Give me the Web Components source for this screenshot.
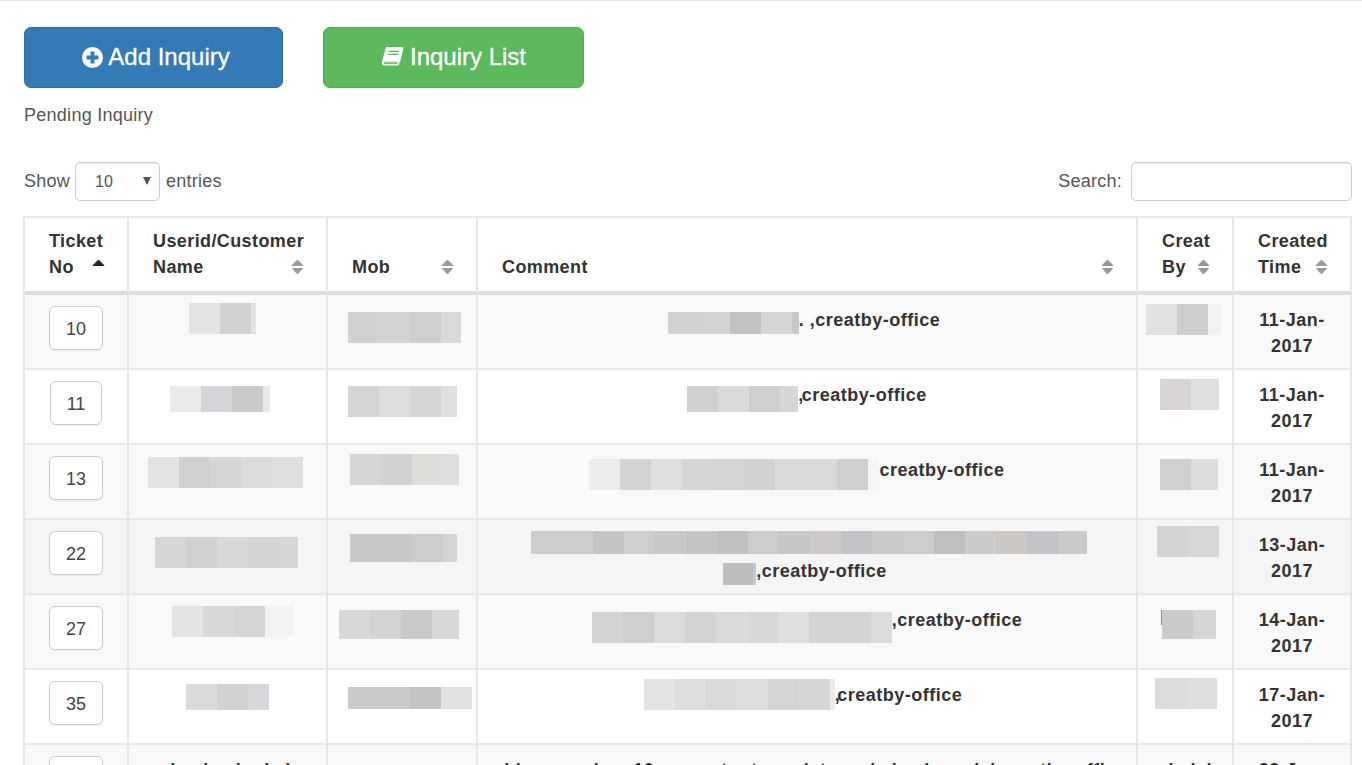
<!DOCTYPE html>
<html lang="en">
<head>
<meta charset="utf-8">
<title>Pending Inquiry</title>
<style>
  html, body { margin: 0; height: 765px; overflow: hidden; background: #fff; }
  body { font-family: "Liberation Sans", Arial, sans-serif; color: #333; }
</style>
</head>
<body>
<inquiry-page></inquiry-page>

<script>
/**
 * 打码色块 — blocks="e4e4e3 d2d0d1 dee3ea/5"，每格默认 31px 宽，/n 指定宽度
 */
class PixelBlock extends HTMLElement {
  connectedCallback() {
    const h = Number(this.getAttribute('h')) || 31;
    const dy = Number(this.getAttribute('dy')) || 0;
    const dx = Number(this.getAttribute('dx')) || 0;
    const cells = (this.getAttribute('blocks') || '').split(' ').map((c) => {
      const [color, w] = c.split('/');
      return `<i style="background:#${color};width:${w || 31}px"></i>`;
    }).join('');
    this.attachShadow({ mode: 'open' });
    this.shadowRoot.innerHTML = `
      <style>
        :host {
          display: inline-flex;
          vertical-align: top;
          height: ${h}px;
          margin: ${dy}px 0 ${-(dy + h)}px ${dx}px;
        }
        i { display: block; height: 100%; }
      </style>${cells}`;
  }
}
customElements.define('pixel-block', PixelBlock);

class SortMark extends HTMLElement {
  connectedCallback() {
    const active = this.hasAttribute('active');
    this.attachShadow({ mode: 'open' });
    this.shadowRoot.innerHTML = `
      <style>
        :host { position: absolute; right: 22px; bottom: 16px; display: block; width: 13px; height: 16px; }
        svg { display: block; }
      </style>
      <svg width="13" height="16" viewBox="0 0 13 16">
        <path d="M6.5 1 L12 6.5 H1 Z" fill="${active ? '#222' : '#999'}" stroke="${active ? '#222' : '#999'}" stroke-width="1" stroke-linejoin="round"/>
        ${active ? '' : '<path d="M1.5 9.5 H11.5 L6.5 15 Z" fill="#999" stroke="#999" stroke-width="1" stroke-linejoin="round"/>'}
      </svg>`;
  }
}
customElements.define('sort-mark', SortMark);

class ActionButton extends HTMLElement {
  connectedCallback() {
    const green = this.getAttribute('tone') === 'green';
    this.attachShadow({ mode: 'open' });
    this.shadowRoot.innerHTML = `
      <style>
        :host { display: block; }
        a {
          display: flex;
          align-items: center;
          justify-content: center;
          gap: ${green ? 6 : 5}px;
          box-sizing: border-box;
          width: ${green ? 261 : 259}px;
          height: 61px;
          padding: 0 0 1px ${green ? 0 : 5}px;
          border: 1px solid ${green ? '#4cae4c' : '#2e6da4'};
          border-radius: 7px;
          background: ${green ? '#5cb85c' : '#337ab7'};
          color: #fff;
          font-size: 24px;
          -webkit-text-stroke: .3px #fff;
          text-decoration: none;
        }
        svg { display: block; flex: none; }
      </style>
      <a href="#"><slot name="icon"></slot><slot></slot></a>`;
  }
}
customElements.define('action-button', ActionButton);

class TicketBox extends HTMLElement {
  connectedCallback() {
    this.attachShadow({ mode: 'open' });
    this.shadowRoot.innerHTML = `
      <style>
        :host {
          display: inline-flex;
          align-items: center;
          justify-content: center;
          box-sizing: border-box;
          width: ${this.getAttribute('w') || 54}px;
          height: 44px;
          padding-top: 1px;
          border: 1px solid #ccc;
          border-radius: 6px;
          background: #fff;
          box-shadow: 0 1px 1px rgba(0, 0, 0, .06);
          color: #444;
          font-size: 18px;
          font-weight: normal;
          letter-spacing: 0;
        }
      </style><slot></slot>`;
  }
}
customElements.define('ticket-box', TicketBox);

class TableControls extends HTMLElement {
  connectedCallback() {
    this.attachShadow({ mode: 'open' });
    this.shadowRoot.innerHTML = `
      <style>
        :host {
          display: flex;
          justify-content: space-between;
          align-items: center;
          height: 39px;
          font-size: 18px;
          letter-spacing: .25px;
          color: #555;
        }
        .side { display: flex; align-items: center; }
        .select {
          position: relative;
          box-sizing: border-box;
          width: 85px;
          height: 39px;
          margin: 0 6px 0 5px;
          padding: 0 0 0 19px;
          border: 1px solid #ccc;
          border-radius: 5px;
          box-shadow: inset 0 1px 1px rgba(0, 0, 0, .075);
          font-size: 16px;
          letter-spacing: 0;
          line-height: 37px;
        }
        .select svg { position: absolute; left: 67px; top: 14px; }
        input {
          box-sizing: border-box;
          width: 221px;
          height: 39px;
          margin-left: 9px;
          border: 1px solid #ccc;
          border-radius: 5px;
          box-shadow: inset 0 1px 1px rgba(0, 0, 0, .075);
          outline: none;
        }
      </style>
      <div class="side">Show
        <div class="select">10<svg width="8" height="8" viewBox="0 0 8 8"><path d="M0 0 H8 L4 8 Z" fill="#555"/></svg></div>
        entries</div>
      <div class="side">Search:<input type="search"></div>`;
  }
}
customElements.define('table-controls', TableControls);

const COL_LEFT = [25, 129, 328, 478, 1138, 1234];
const office = 'creatby-office';
const comma = (px) => `<span style="letter-spacing:${px}px">,</span>${office}`;

// 坐标都是截图里的绝对位置，渲染时换算成单元格内的偏移
const ROWS = [
  {
    no: 10, w: 54, date: '11-Jan-2017',
    user: { x: 189, y: 303, blocks: 'e4e4e3 d2d0d1 dee3ea/5' },
    mob: { x: 348, y: 312, blocks: 'd2d1cf d4d3d2 cfcfcf d9d9db/20' },
    by: [{ x: 1146, y: 304, blocks: 'e1e1e1 cecccd f1f2f4/13' }],
    comment: [[{ y: 312, h: 22, blocks: 'd2d0d1 d3d2d2 c3c1c3 d6d6d8 c9c7c9/7' }, `. ,${office}`, -3]],
  },
  {
    no: 11, w: 52, date: '11-Jan-2017',
    user: { x: 170, y: 386, h: 26, blocks: 'ebebec d5d4d8 cbc9ca e6e9ee/7' },
    mob: { x: 348, y: 386, blocks: 'd5d4d2 dcdddc d6d6d6 e0e0e2/16' },
    by: [{ x: 1160, y: 379, blocks: 'd7d3d6 e0e0e2/28' }],
    comment: [[{ y: 386, h: 26, blocks: 'cfcfcf dad9db cfcecf d6d6d8/18' }, comma(-1.5), 0]],
  },
  {
    no: 13, w: 54, date: '11-Jan-2017',
    user: { x: 148, y: 457, blocks: 'e3e3e3 d1cfd0 d4d5d7 dbdbd9 dfdfdf' },
    mob: { x: 350, y: 454, blocks: 'd6d6d4 d1d1cf dcdcd9 dddee0/16' },
    by: [{ x: 1160, y: 459, blocks: 'd1cfd0 dcdcde/27' }],
    comment: [[{ y: 459, blocks: 'ececec d3d3d3 dfdfdf d5d5d5 d5d4d5 d2d0d1 d9dadb dadadb cfcfcf f4f4f4/11' }, office, -10]],
  },
  {
    no: 22, w: 54, date: '13-Jan-2017',
    user: { x: 155, y: 537, blocks: 'd5d5d3 d1cfd0 d8d8da d3d3d3 d5d7d6/19' },
    mob: { x: 350, y: 534, h: 28, blocks: 'c9c9c9 c9c9c7 cecdcd d1d5d5/14' },
    by: [{ x: 1157, y: 526, blocks: 'd3d3d5 d7d7d7' }],
    comment: [
      [{ y: 531, h: 23, blocks: 'cdcdcd cdcdcd c4c4c6 d0cdce c8c8ca c4c4c4 c0c0c3 cccccc c7c7c7 ccc9c8 c3c3c7 cacaca cbcccb bfbfbf cbcbcb cac7c4 c3c4c8 c9cac9/29' }, '', 2],
      [{ y: 563, h: 22, blocks: 'bfbdbf/30 b8cadf/3' }, `,${office}`, -2],
    ],
  },
  {
    no: 27, w: 54, date: '14-Jan-2017',
    user: { x: 172, y: 606, blocks: 'e5e3e4 d8d8d8 d4d4d4 f2f4f4/29' },
    mob: { x: 339, y: 610, h: 29, blocks: 'd8d8d8 d2d2d3 cacaca d7d8d9/27' },
    by: [{ x: 1161, y: 610, h: 15, blocks: 'a8825f/1' }, { y: 610, h: 29, blocks: 'cbcbcd d4d4d6/23' }],
    comment: [[{ y: 612, blocks: 'd3d3d3 cfcdce dcdadc d2d2d2 dadada d7d7d7 dfdfdf d3d3d5 d3d3d3 dbdbdd/21' }, `,${office}`, 0]],
  },
  {
    no: 35, w: 54, date: '17-Jan-2017',
    user: { x: 186, y: 684, h: 26, blocks: 'dbd9da d1d1d1 d7d6da/21' },
    mob: { x: 348, y: 687, h: 22, blocks: 'cacac8 cacac8 c4c4c4 e1e1e3' },
    by: [{ x: 1155, y: 678, blocks: 'dcdadb dedee0' }],
    comment: [[{ y: 679, blocks: 'e4e3e5 dddddd d9d9d9 dedede d5d3d4 d6d6d6 ececec/5' }, comma(-2.5), -4]],
  },
];

class InquiryTable extends HTMLElement {
  block(b, col, lineTop) {
    const dx = b.x === undefined ? 0 : b.x - COL_LEFT[col];
    return `<pixel-block blocks="${b.blocks}" h="${b.h || 31}" dx="${dx}" dy="${b.y - lineTop}"></pixel-block>`;
  }

  row(r, i) {
    const lineTop = 306 + 75 * i;
    const comment = r.comment.map(([b, text, shift], n) => `
      <div class="line" style="transform:translateX(${shift}px)">${this.block(b, 3, lineTop + 1 + 26 * n)}${text}</div>`).join('');
    return `
      <tr class="${i === 3 ? 'hover' : i % 2 === 0 ? 'odd' : ''}">
        <td class="no"><ticket-box w="${r.w}">${r.no}</ticket-box></td>
        <td class="flat">${this.block(r.user, 1, lineTop)}</td>
        <td class="flat">${this.block(r.mob, 2, lineTop)}</td>
        <td class="comment">${comment}</td>
        <td class="flat">${r.by.map((b) => this.block(b, 4, lineTop)).join('')}</td>
        <td class="date">${r.date}</td>
      </tr>`;
  }

  connectedCallback() {
    this.attachShadow({ mode: 'open' });
    this.shadowRoot.innerHTML = `
      <style>
        :host { display: block; margin: 15px 0 0 -1px; width: 1329px; }
        table {
          table-layout: fixed;
          width: 1329px;
          border-collapse: separate;
          border-spacing: 0;
          border-top: 2px solid #e8e8e8;
          border-left: 2px solid #e8e8e8;
          font-size: 18px;
          font-weight: bold;
          line-height: 26px;
          letter-spacing: .5px;
          color: #333;
        }
        th, td {
          border-right: 2px solid #e8e8e8;
          border-bottom: 2px solid #e8e8e8;
          box-sizing: border-box;
          padding: 11px 0 0;
          vertical-align: top;
        }
        th {
          position: relative;
          height: 77px;
          padding: 10px 20px 11px 24px;
          border-bottom: 4px solid #ddd;
          vertical-align: bottom;
          text-align: left;
          letter-spacing: .4px;
        }
        td { height: 75px; background: #fff; }
        tr.odd td { background: #f9f9f9; }
        tr.hover td { background: #f5f5f5; }
        td.no, td.over { text-align: center; }
        td.comment { padding-top: 12px; text-align: center; }
        td.date { padding: 12px 20px 0; text-align: center; }
        td.over { padding-top: 12px; }
        td.flat { text-align: left; white-space: nowrap; }
        .line { min-height: 26px; }
      </style>
      <table>
        <colgroup>
          <col style="width:104px"><col style="width:199px"><col style="width:150px">
          <col style="width:660px"><col style="width:96px"><col style="width:118px">
        </colgroup>
        <thead>
          <tr>
            <th>Ticket No<sort-mark active></sort-mark></th>
            <th>Userid/Customer Name<sort-mark></sort-mark></th>
            <th>Mob<sort-mark></sort-mark></th>
            <th>Comment<sort-mark></sort-mark></th>
            <th>Creat By<sort-mark></sort-mark></th>
            <th>Created Time<sort-mark></sort-mark></th>
          </tr>
        </thead>
        <tbody>
          ${ROWS.map((r, i) => this.row(r, i)).join('')}
          <tr class="odd">
            <td class="no"><ticket-box>36</ticket-box></td>
            <td class="over">mina bachu kale</td>
            <td></td>
            <td class="comment">address and no 10 computer to update and check model creatby-office</td>
            <td class="over">shalaj</td>
            <td class="date">22-Jan-2017</td>
          </tr>
        </tbody>
      </table>`;
  }
}
customElements.define('inquiry-table', InquiryTable);

class InquiryPage extends HTMLElement {
  connectedCallback() {
    this.attachShadow({ mode: 'open' });
    this.shadowRoot.innerHTML = `
      <style>
        :host {
          display: block;
          box-sizing: border-box;
          height: 765px;
          overflow: hidden;
          padding: 26px 10px 0 24px;
          border-top: 1px solid #e7e7e7;
        }
        .buttons { display: flex; gap: 40px; }
        .pending { margin: 14px 0 34px; font-size: 18px; letter-spacing: .27px; line-height: 26px; color: #555; }
      </style>
      <div class="buttons">
        <action-button>
          <svg slot="icon" width="21" height="21" viewBox="0 0 21 21">
            <circle cx="10.5" cy="10.5" r="10.5" fill="#fff"/>
            <path d="M8.6 4.500h3.800v4.100h4.100v3.800h-4.100v4.100H8.600v-4.100H4.500V8.600h4.100z" fill="#337ab7"/>
          </svg>
          Add Inquiry
        </action-button>
        <action-button tone="green">
          <svg slot="icon" width="23" height="22" viewBox="0 0 22 22" preserveAspectRatio="none">
            <path d="M6 1h14.500c.8 0 1.200.6 1 1.300l-3.600 15c-.3 1.300-1.300 2.200-2.600 2.200H3.200C1.400 19.500 .3 18 .8 16.200L4.300 2.500C4.500 1.600 5.100 1 6 1z" fill="#fff"/>
            <path d="M3 16.300h12.800M2.800 17.600h13" stroke="#5cb85c" stroke-width=".9" fill="none"/>
            <path d="M7.600 5.300h9.500M6.900 8.400h9.500" stroke="#5cb85c" stroke-width="1.300" fill="none"/>
            <path d="M18 16.300l-.4 1.600" stroke="#5cb85c" stroke-width="1" fill="none"/>
          </svg>
          Inquiry List
        </action-button>
      </div>
      <div class="pending">Pending Inquiry</div>
      <table-controls></table-controls>
      <inquiry-table></inquiry-table>`;
  }
}
customElements.define('inquiry-page', InquiryPage);
</script>
</body>
</html>
